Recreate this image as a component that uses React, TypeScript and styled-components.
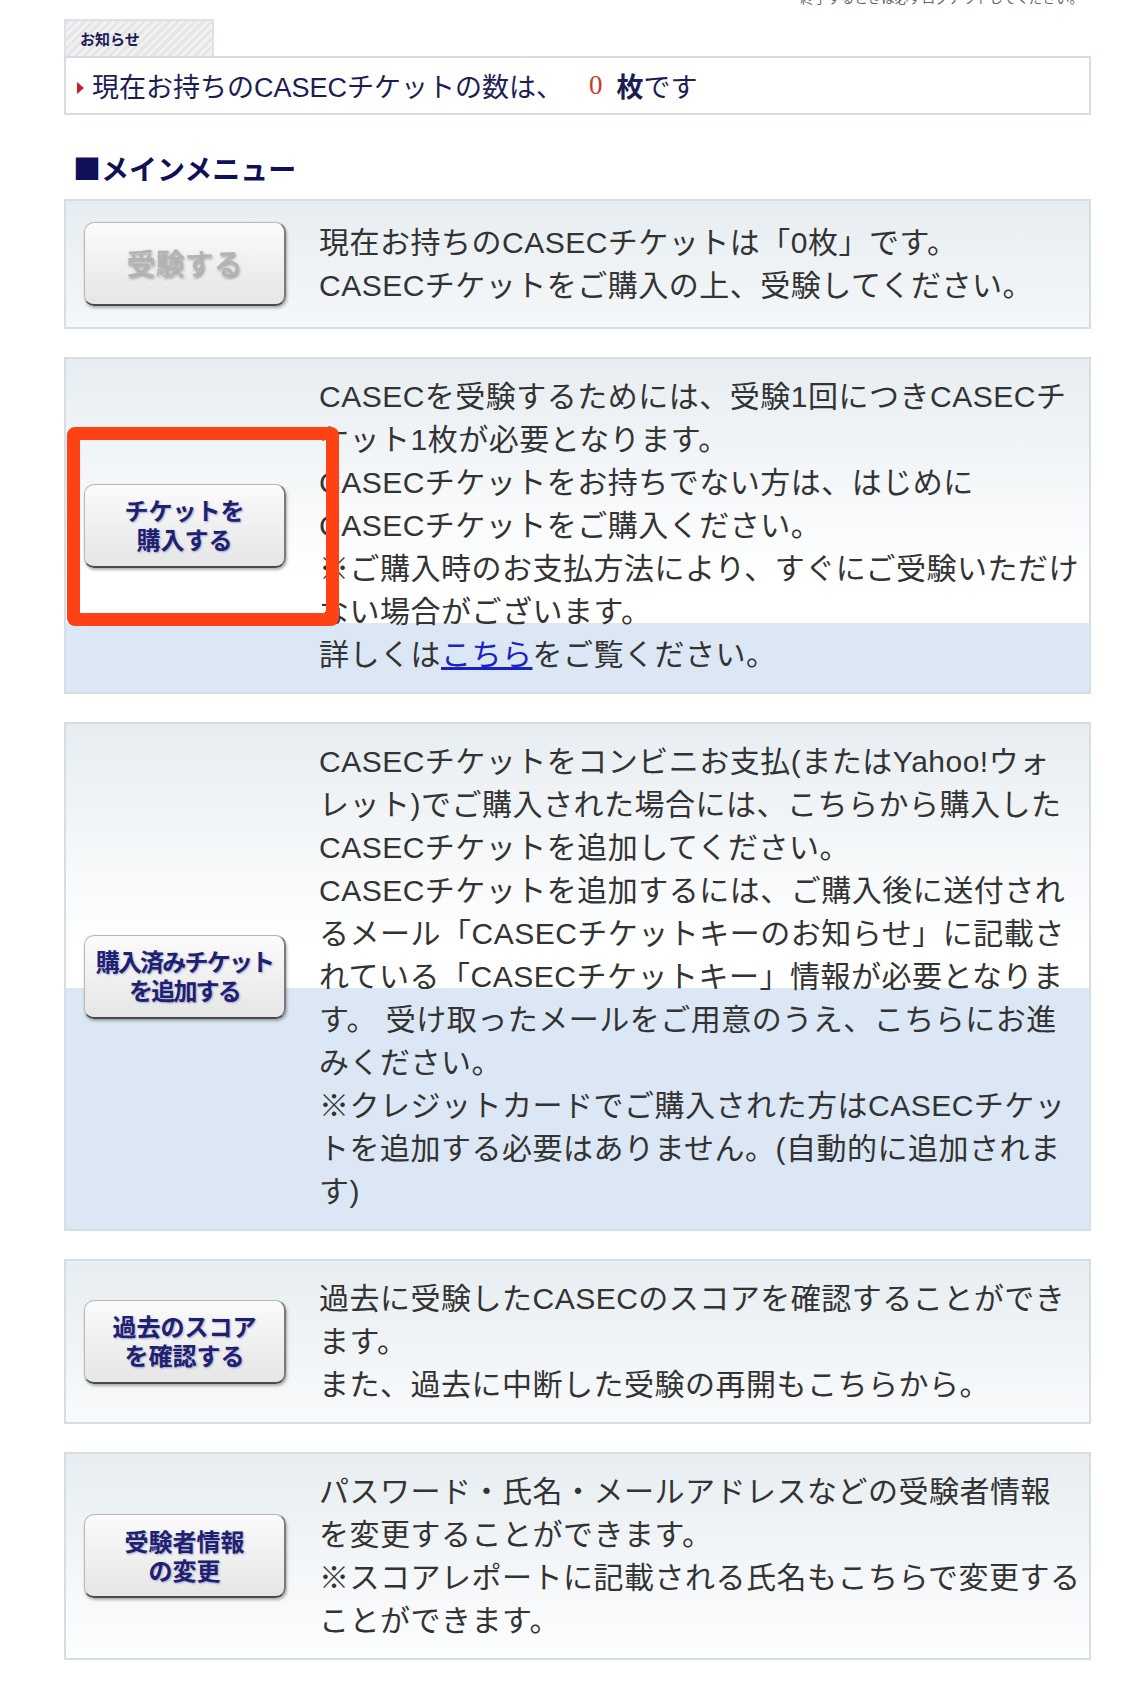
import styled, { createGlobalStyle } from "styled-components";

const GlobalStyle = createGlobalStyle`
  html, body {
    margin: 0;
    padding: 0;
    background: #fff;
  }
  body {
    font-family: "Liberation Sans", "Noto Sans CJK JP", sans-serif;
    color: #333;
  }
`;

const Page = styled.div`
  width: 1125px;
  height: 1689px;
  overflow: hidden;
  padding: 0 34px 0 64px;
  box-sizing: border-box;
`;

const TopNote = styled.p`
  margin: -12px 0 0;
  padding-right: 8px;
  text-align: right;
  font-family: "Noto Sans CJK JP", sans-serif;
  font-size: 13.5px;
  line-height: 18px;
  color: #666;
`;

const Tab = styled.div`
  margin-top: 13px;
  width: 150px;
  height: 37px;
  box-sizing: border-box;
  display: flex;
  align-items: center;
  padding-left: 14px;
  border: 2px solid #dde2ea;
  border-bottom: none;
  background: repeating-linear-gradient(135deg, #e6e6e6 0 3px, #f1f1f1 3px 6px);
  font-family: "Noto Sans CJK JP", sans-serif;
  font-size: 15px;
  font-weight: 700;
  color: #1d1d55;
`;

const Notice = styled.div`
  height: 59px;
  box-sizing: border-box;
  display: flex;
  align-items: center;
  padding-left: 11px;
  border: 2px solid #d6dce6;
  font-size: 27px;
  color: #1d1d55;
  white-space: nowrap;
`;

const Marker = styled.span`
  width: 0;
  height: 0;
  border-left: 7px solid #c4222b;
  border-top: 6px solid transparent;
  border-bottom: 6px solid transparent;
  margin: 4px 8px 0 0;
`;

const Count = styled.span`
  font-family: "Liberation Serif", serif;
  color: #d2352b;
  margin: 0 14px 0 26px;
`;

const Unit = styled.b`
  font-weight: 700;
`;

const Heading = styled.h2`
  margin: 38px 0 16px;
  padding-left: 9px;
  font-family: "Noto Sans CJK JP", sans-serif;
  font-size: 28px;
  line-height: 30px;
  font-weight: 700;
  color: #10105a;
`;

const Menu = styled.div`
  display: flex;
  flex-direction: column;
  gap: 28px;
`;

const Row = styled.div`
  position: relative;
  display: grid;
  grid-template-columns: 235px 1fr;
  align-items: center;
  min-height: 130px;
  box-sizing: border-box;
  padding: 16px 16px 16px 18px;
  border: 2px solid #d5dde5;
  background: linear-gradient(
    180deg,
    #e7edf1 0px,
    #ffffff 220px,
    #ffffff 264px,
    #dbe7f4 264px
  );
`;

const Button = styled.button<{ $disabled?: boolean; $tight?: boolean }>`
  width: 202px;
  height: 84px;
  box-sizing: border-box;
  padding: 0 0 2px;
  display: flex;
  flex-direction: column;
  align-items: center;
  justify-content: center;
  border-radius: 10px;
  border: 1px solid #b7b7b7;
  border-right: 2px solid #7a7a7a;
  border-bottom: 2px solid #4a4a4a;
  background: linear-gradient(180deg, #fbfbfb 0%, #efefef 55%, #e6e6e6 100%);
  box-shadow: 1px 2px 3px rgba(0, 0, 0, 0.3);
  font-family: "Noto Sans CJK JP", sans-serif;
  font-weight: ${(p) => (p.$disabled ? 500 : 700)};
  font-size: ${(p) => (p.$disabled ? "29px" : "24px")};
  line-height: 29px;
  letter-spacing: ${(p) => (p.$tight ? "-1.8px" : "0px")};
  color: ${(p) => (p.$disabled ? "#b3b3b3" : "#1f2170")};
  text-shadow: ${(p) =>
    p.$disabled ? "1px 2px 3px rgba(0,0,0,0.35)" : "1px 1px 2px rgba(90,110,170,0.55)"};
  cursor: ${(p) => (p.$disabled ? "default" : "pointer")};
`;

const Text = styled.p`
  margin: 0;
  font-size: 30px;
  line-height: 43px;
  letter-spacing: 0.5px;
  color: #333;
  white-space: nowrap;
`;

const Link = styled.a`
  color: #1b22c4;
  text-decoration: underline;
`;

const Highlight = styled.div`
  position: absolute;
  left: 1px;
  top: 68px;
  width: 272px;
  height: 199px;
  box-sizing: border-box;
  border: 13px solid #ff4114;
  border-radius: 8px;
  pointer-events: none;
`;

export default function App() {
  return (
    <>
      <GlobalStyle />
      <Page>
        <TopNote>終了するときは必ずログアウトしてください。</TopNote>
        <Tab>お知らせ</Tab>
        <Notice>
          <Marker />
          現在お持ちのCASECチケットの数は、
          <Count>0</Count>
          <Unit>枚</Unit>です
        </Notice>

        <Heading>■メインメニュー</Heading>

        <Menu>
          <Row>
            <Button $disabled>受験する</Button>
            <Text>
              現在お持ちのCASECチケットは「0枚」です。
              <br />
              CASECチケットをご購入の上、受験してください。
            </Text>
          </Row>

          <Row>
            <Button>
              チケットを
              <br />
              購入する
            </Button>
            <Text>
              CASECを受験するためには、受験1回につきCASECチ
              <br />
              ケット1枚が必要となります。
              <br />
              CASECチケットをお持ちでない方は、はじめに
              <br />
              CASECチケットをご購入ください。
              <br />
              ※ご購入時のお支払方法により、すぐにご受験いただけ
              <br />
              ない場合がございます。
              <br />
              詳しくは<Link href="#">こちら</Link>をご覧ください。
            </Text>
            <Highlight />
          </Row>

          <Row>
            <Button $tight>
              購入済みチケット
              <br />
              を追加する
            </Button>
            <Text>
              CASECチケットをコンビニお支払(またはYahoo!ウォ
              <br />
              レット)でご購入された場合には、こちらから購入した
              <br />
              CASECチケットを追加してください。
              <br />
              CASECチケットを追加するには、ご購入後に送付され
              <br />
              るメール「CASECチケットキーのお知らせ」に記載さ
              <br />
              れている「CASECチケットキー」情報が必要となりま
              <br />
              す。 受け取ったメールをご用意のうえ、こちらにお進
              <br />
              みください。
              <br />
              ※クレジットカードでご購入された方はCASECチケッ
              <br />
              トを追加する必要はありません。(自動的に追加されま
              <br />
              す)
            </Text>
          </Row>

          <Row>
            <Button>
              過去のスコア
              <br />
              を確認する
            </Button>
            <Text>
              過去に受験したCASECのスコアを確認することができ
              <br />
              ます。
              <br />
              また、過去に中断した受験の再開もこちらから。
            </Text>
          </Row>

          <Row>
            <Button>
              受験者情報
              <br />
              の変更
            </Button>
            <Text>
              パスワード・氏名・メールアドレスなどの受験者情報
              <br />
              を変更することができます。
              <br />
              ※スコアレポートに記載される氏名もこちらで変更する
              <br />
              ことができます。
            </Text>
          </Row>
        </Menu>
      </Page>
    </>
  );
}
